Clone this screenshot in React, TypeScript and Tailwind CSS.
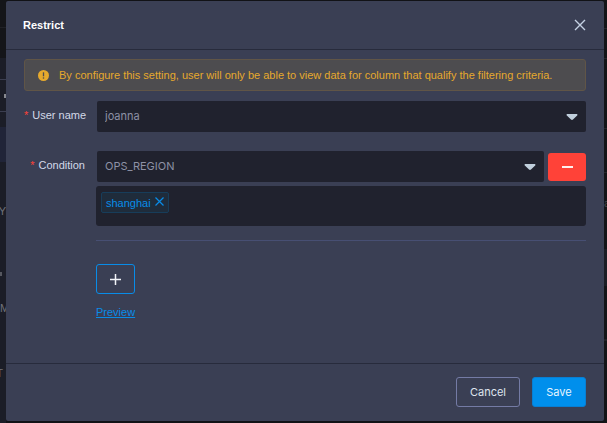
import React, { useState } from "react";

const helvetica = "font-['Liberation_Sans',Arial,sans-serif]";

function Caret() {
  return (
    <svg className="pointer-events-none absolute top-1/2 right-2 h-[7px] w-3 -translate-y-1/2" viewBox="0 0 12 7" aria-hidden="true">
      <path d="M1.4 .5h9.2c.9 0 1.2.9.6 1.5L7 6c-.6.6-1.400.6-2 0L.8 2C.2 1.400.5.5 1.400.5Z" fill="#c0cfdc" />
    </svg>
  );
}

function Select({ id, options }: { id: string; options: string[] }) {
  return (
    <div className="relative min-w-0 flex-1">
      <select
        id={id}
        className="block h-[31px] w-full appearance-none rounded-[2px] bg-[#20222e] pr-8 pl-2 font-['Inter',sans-serif] text-[11px] text-[#8d91a5] outline-none"
      >
        {options.map((o) => (
          <option key={o}>{o}</option>
        ))}
      </select>
      <Caret />
    </div>
  );
}

function Label({ htmlFor, children }: { htmlFor: string; children: React.ReactNode }) {
  return (
    <label htmlFor={htmlFor} className="w-[61px] shrink-0 pt-2 text-right text-[11px] leading-[13px] whitespace-nowrap text-[#d3d9e8]">
      <span className="mr-1 text-[#ff4238]">*</span>
      {children}
    </label>
  );
}

function LeftEdge() {
  return (
    <div className="flex w-1.5 shrink-0 flex-col overflow-hidden bg-[#1b1d27] text-[11px] leading-4 text-[#70727a]" aria-hidden="true">
      <div className="h-7 shrink-0 border-b border-[#202126] bg-[#141519]" />
      <div className="h-[30px] shrink-0 bg-[#141519]" />
      <div className="h-[22px] shrink-0 border-b border-[#3b3e50]" />
      <div className="flex h-8 shrink-0 items-center justify-end border-b border-[#3b3e50]">
        <span className="h-1 w-0.5 bg-[#888a90]" />
      </div>
      <div className="h-[15px] shrink-0" />
      <div className="h-[35px] shrink-0 bg-[#202438]" />
      <div className="flex h-[102px] shrink-0 justify-end pt-[41px]">Y</div>
      <div className="flex h-9 shrink-0 justify-end">
        <span className="mt-2 mr-1 h-1 w-0.5 bg-[#55575f]" />
      </div>
      <div className="h-[65px] shrink-0">M</div>
      <div className="flex justify-end pr-[3px]">T</div>
    </div>
  );
}

function RightEdge() {
  return (
    <div className="flex w-[3px] shrink-0 flex-col overflow-hidden bg-[#131417] text-[11px] leading-4 text-[#45474d]" aria-hidden="true">
      <div className="h-[29px] shrink-0 border-b border-[#24252a]" />
      <div className="h-[30px] shrink-0 border-b border-[#24252a]" />
      <div className="h-[70px] shrink-0 border-b border-[#24252a]" />
      <div className="h-11 shrink-0 border-b border-[#24252a]" />
      <div className="h-[76px] shrink-0 pt-[22px]">a</div>
      <div className="h-[37px] shrink-0 bg-[#1b1d24]" />
      <div className="h-[55px] shrink-0 border-b-2 border-[#202126]" />
    </div>
  );
}

export default function App() {
  const [tags, setTags] = useState(["shanghai"]);
  return (
    <div className={`flex h-screen bg-[#111216] ${helvetica}`}>
      <LeftEdge />
      <div
        role="dialog"
        aria-labelledby="dialog-title"
        className="mt-px mb-0.5 flex min-w-0 flex-1 flex-col rounded-[2px] bg-[#3a3f54]"
      >
        <header className="flex h-[49px] shrink-0 items-center justify-between border-b border-[#272b3c] pr-[18px] pl-[17px]">
          <h1 id="dialog-title" className="text-[11px] leading-4 font-bold text-white">
            Restrict
          </h1>
          <button type="button" aria-label="Close" className="text-[#c5d2e4]">
            <svg className="size-3" viewBox="0 0 12 12" fill="none" stroke="currentColor" strokeWidth="1.4" aria-hidden="true">
              <path d="M1 1l10 10M11 1L1 11" />
            </svg>
          </button>
        </header>

        <main className="flex-1 pt-[9px] pr-[18px] pl-[18px]">
          <div role="alert" className="flex h-8 items-center gap-2.5 rounded-[3px] border border-[#605547] bg-[#4d4c4f] pl-[13px] text-[11px] whitespace-nowrap text-[#e6a92d]">
            <svg className="size-[11px] shrink-0" viewBox="0 0 11 11" aria-hidden="true">
              <circle cx="5.5" cy="5.5" r="5.5" fill="#e6a92d" />
              <path d="M5.500 2.300v4" stroke="#4d4c4f" strokeWidth="1.300" />
              <circle cx="5.500" cy="8" r=".8" fill="#4d4c4f" />
            </svg>
            By configure this setting, user will only be able to view data for column that qualify the filtering criteria.
          </div>

          <div className="mt-2.5 flex gap-3">
            <Label htmlFor="user">User name</Label>
            <Select id="user" options={["joanna"]} />
          </div>

          <div className="mt-[19px] flex gap-[11px]">
            <Label htmlFor="condition">Condition</Label>
            <div className="min-w-0 flex-1">
              <div className="flex items-center gap-1 pl-px">
                <Select id="condition" options={["OPS_REGION"]} />
                <button type="button" aria-label="Remove condition" className="flex h-7 w-[38px] items-center justify-center rounded-[3px] bg-[#ff4238]">
                  <span className="h-0.5 w-[11px] bg-[#fff0ef]" />
                </button>
              </div>
              <div className="mt-1 flex h-10 items-start rounded-[3px] bg-[#20222e] px-[5px] py-1.5">
                {tags.map((tag) => (
                  <span key={tag} className="flex h-[21px] gap-1 rounded-[2px] border border-[#173d5a] bg-[#1f2c3b] px-1 text-[11px] leading-[21px] text-[#088ce8]">
                    {tag}
                    <button type="button" aria-label={`Remove ${tag}`} className="mt-1 size-[9px]" onClick={() => setTags(tags.filter((t) => t !== tag))}>
                      <svg className="size-[9px]" viewBox="0 0 9 9" stroke="currentColor" strokeWidth="1.2" aria-hidden="true">
                        <path d="M.5 .5l8 8M8.500 .5l-8 8" />
                      </svg>
                    </button>
                  </span>
                ))}
              </div>
              <hr className="mt-3.5 border-[#474f73]" />
              <button type="button" aria-label="Add condition" className="mt-[23px] flex h-[30px] w-[39px] items-center justify-center rounded-[3px] border border-[#088ce8] text-[#f2f4f8]">
                <svg className="size-[11px]" viewBox="0 0 11 11" stroke="currentColor" strokeWidth="1.500" aria-hidden="true">
                  <path d="M5.500 0v11M0 5.500h11" />
                </svg>
              </button>
              <a href="#preview" className="mt-2.5 inline-block text-[11px] leading-4 text-[#088ce8] underline">
                Preview
              </a>
            </div>
          </div>
        </main>

        <footer className="flex h-[58px] shrink-0 items-start justify-end gap-3 border-t border-[#272b3c] pt-[13px] pr-[18px] font-['Inter',sans-serif] text-[11px]">
          <button type="button" className="h-[30px] w-16 rounded-[3px] border border-[#747ba5] text-[#dfe4ee]">
            Cancel
          </button>
          <button type="button" className="h-[30px] w-[54px] rounded-[3px] border border-[#087fd4] bg-[#008fec] text-[#e6f5ff]">
            Save
          </button>
        </footer>
      </div>
      <RightEdge />
    </div>
  );
}
